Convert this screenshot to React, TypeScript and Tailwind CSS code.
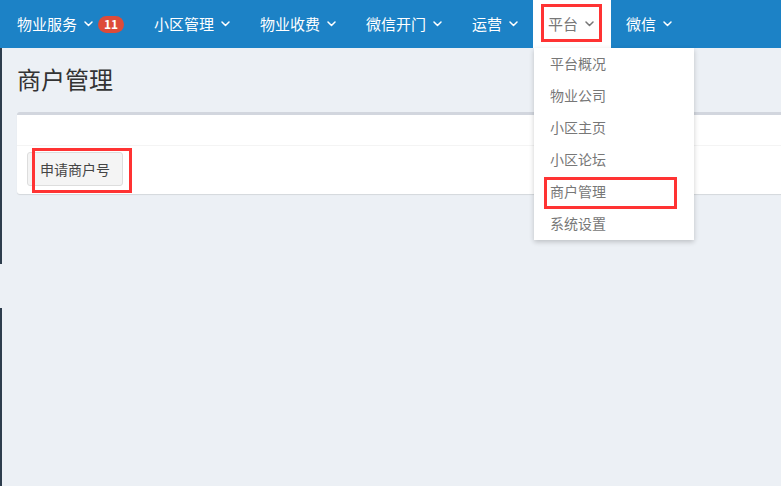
import React from 'react'

const font = { fontFamily: '"Noto Sans CJK SC", "Noto Sans", sans-serif' }

const Chevron = ({ className }: { className?: string }) => (
  <svg width="9" height="6" viewBox="0 0 9 6" className={className} fill="none">
    <polyline points="1,1 4.5,4.5 8,1" stroke="currentColor" strokeWidth="1.5" strokeLinecap="round" strokeLinejoin="round" />
  </svg>
)

const navItems = ['小区管理', '物业收费', '微信开门', '运营']
const menuItems = ['平台概况', '物业公司', '小区主页', '小区论坛', '商户管理', '系统设置']

const App = () => {
  return (
    <div className="relative w-[781px] h-[486px] overflow-hidden bg-[#ecf0f5]" style={font}>
      {/* top nav */}
      <nav className="flex h-12 pl-[2px] bg-[#1c82c6] text-white text-[15px]">
        <a className="flex items-center px-[15px]">
          物业服务
          <Chevron className="ml-[7px]" />
          <span className="ml-[5px] flex items-center justify-center w-[26px] h-[17px] rounded-full bg-[#dd4b39] text-[12px] font-bold leading-none">
            11
          </span>
        </a>
        {navItems.map((t) => (
          <a key={t} className="flex items-center px-[15px]">
            {t}
            <Chevron className="ml-[7px]" />
          </a>
        ))}
        <a className="flex items-center pl-[15px] pr-[17px] bg-white text-[#777]">
          平台
          <Chevron className="ml-[7px]" />
        </a>
        <a className="flex items-center px-[15px]">
          微信
          <Chevron className="ml-[7px]" />
        </a>
      </nav>

      <div className="flex h-[438px]">
        {/* sidebar edge */}
        <div className="flex flex-col w-[2px] shrink-0">
          <div className="h-[216px] bg-[#2e3d4d]" />
          <div className="h-[44px]" />
          <div className="flex-1 bg-[#2e3d4d]" />
        </div>

        <main className="flex-1 pl-[15px]">
          <h1 className="pt-[14px] h-[64px] text-[24px] leading-[34px] text-[#333]">商户管理</h1>
          <div className="w-[800px] bg-white border-t-[3px] border-[#d2d6de] rounded-[3px] shadow-[0_1px_1px_rgba(0,0,0,0.1)]">
            <div className="h-[31px] border-b border-[#f4f4f4]" />
            <div className="pl-[10px] pt-[6px] pb-[8px]">
              <button className="h-[34px] px-[12px] bg-[#f4f4f4] border border-[#ddd] rounded-[3px] text-[14px] text-[#444]">
                申请商户号
              </button>
            </div>
          </div>
        </main>
      </div>

      {/* dropdown */}
      <div className="absolute left-[534px] top-[48px] w-[160px] bg-white shadow-[0_2px_5px_rgba(0,0,0,0.2)]">
        {menuItems.map((t) => (
          <div key={t} className="h-8 flex items-center pl-[16px] pb-[1px] text-[14px] text-[#777]">
            {t}
          </div>
        ))}
      </div>

      {/* annotations */}
      <div className="absolute left-[541px] top-[4px] w-[61px] h-[38px] border-[3px] border-[#f33]" />
      <div className="absolute left-[544px] top-[177px] w-[133px] h-[32px] border-[3px] border-[#f33]" />
      <div className="absolute left-[32px] top-[148px] w-[100px] h-[45px] border-[3px] border-[#f33]" />
    </div>
  )
}

export default App
